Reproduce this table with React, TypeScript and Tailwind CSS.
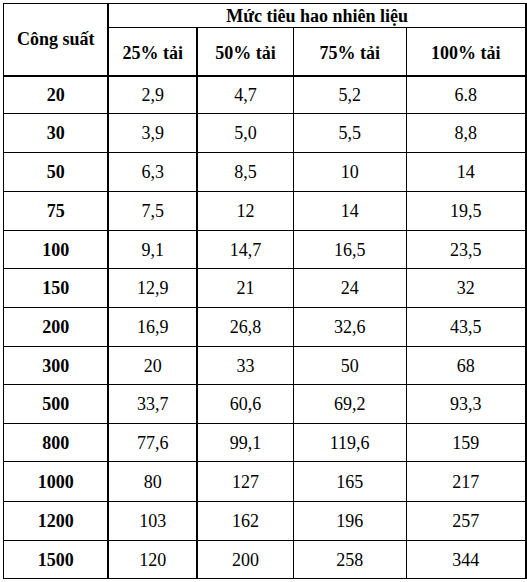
const rows: [string, string, string, string, string, number][] = [
  ["20", "2,9", "4,7", "5,2", "6.8", 38],
  ["30", "3,9", "5,0", "5,5", "8,8", 39],
  ["50", "6,3", "8,5", "10", "14", 39],
  ["75", "7,5", "12", "14", "19,5", 39],
  ["100", "9,1", "14,7", "16,5", "23,5", 38],
  ["150", "12,9", "21", "24", "32", 39],
  ["200", "16,9", "26,8", "32,6", "43,5", 39],
  ["300", "20", "33", "50", "68", 38],
  ["500", "33,7", "60,6", "69,2", "93,3", 39],
  ["800", "77,6", "99,1", "119,6", "159", 38],
  ["1000", "80", "127", "165", "217", 40],
  ["1200", "103", "162", "196", "257", 39],
  ["1500", "120", "200", "258", "344", 38],
];

const App = () => {
  return (
    <div className="w-[527px] h-[582px] bg-white pl-[3px] pt-[3px] overflow-hidden">
      <table
        className="table-fixed border-collapse text-black text-[18px] leading-none"
        style={{ fontFamily: '"Liberation Serif", "Times New Roman", serif' }}
      >
        <colgroup>
          <col className="w-[105px]" />
          <col className="w-[89px]" />
          <col className="w-[96px]" />
          <col className="w-[113px]" />
          <col className="w-[120px]" />
        </colgroup>
        <thead>
          <tr className="h-[24px]">
            <th
              rowSpan={2}
              className="border border-black border-r-2 border-b-2 font-bold text-center align-middle"
            >
              Công suất
            </th>
            <th
              colSpan={4}
              className="border border-black border-r-2 font-bold text-center align-middle"
            >
              Mức tiêu hao nhiên liệu
            </th>
          </tr>
          <tr className="h-[48px]">
            <th className="border border-black border-r-2 border-b-2 font-bold text-center align-middle pt-1">25% tải</th>
            <th className="border border-black border-b-2 font-bold text-center align-middle pt-1">50% tải</th>
            <th className="border border-black border-b-2 font-bold text-center align-middle pt-1">75% tải</th>
            <th className="border border-black border-r-2 border-b-2 font-bold text-center align-middle pt-1">100% tải</th>
          </tr>
        </thead>
        <tbody>
          {rows.map(([p, a, b, c, d, h]) => (
            <tr key={p} style={{ height: h }}>
              <td className="border border-black border-r-2 font-bold text-center align-middle">{p}</td>
              <td className="border border-black border-r-2 text-center align-middle">{a}</td>
              <td className="border border-black text-center align-middle">{b}</td>
              <td className="border border-black text-center align-middle">{c}</td>
              <td className="border border-black border-r-2 text-center align-middle">{d}</td>
            </tr>
          ))}
        </tbody>
      </table>
    </div>
  );
};

export default App;
